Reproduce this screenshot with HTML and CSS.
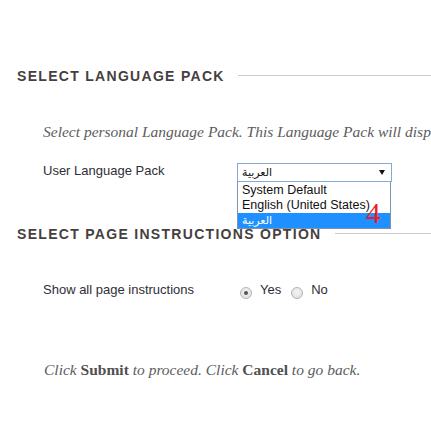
FILE: index.html
```html
<!DOCTYPE html>
<html lang="en">
<head>
<meta charset="utf-8">
<title>Personal Settings</title>
<link rel="stylesheet" href="styles.css">
</head>
<body>
<div class="page">
  <section class="step step-first">
    <div class="step-head">
      <h2 class="step-title">Select Language Pack</h2>
      <span class="step-rule"></span>
    </div>
    <p class="step-intro">Select personal Language Pack. This Language Pack will display in all areas of the system.</p>
    <div class="field-row field-lang">
      <label class="field-label">User Language Pack</label>
      <div class="select-wrap">
        <div class="select-box">
          <span class="select-value" dir="rtl">العربية</span>
          <span class="select-arrow"></span>
        </div>
        <ul class="select-list">
          <li class="opt">System Default</li>
          <li class="opt">English (United States)</li>
          <li class="opt opt-active"><span dir="rtl">العربية</span></li>
        </ul>
        <span class="marker">4</span>
      </div>
    </div>
  </section>

  <section class="step step-second">
    <div class="step-head">
      <h2 class="step-title">Select Page Instructions Option</h2>
      <span class="step-rule"></span>
    </div>
    <div class="field-row field-instr">
      <label class="field-label">Show all page instructions</label>
      <div class="radio-group">
        <span class="radio radio-on"></span><span class="radio-text">Yes</span>
        <span class="radio"></span><span class="radio-text">No</span>
      </div>
    </div>
  </section>

  <p class="submit-note">Click <strong>Submit</strong> to proceed. Click <strong>Cancel</strong> to go back.</p>
</div>
</body>
</html>
```

FILE: styles.css
```css
html, body {
  margin: 0;
  padding: 0;
  overflow: hidden;
  background: #ffffff;
}

.page {
  width: 431px;
  height: 448px;
  font-family: "Liberation Sans", Arial, sans-serif;
}

.step-head {
  display: flex;
  align-items: center;
  padding-left: 17px;
}

.step-first .step-head {
  padding-top: 68px;
}

.step-title {
  margin: 0;
  font-size: 14px;
  line-height: 16px;
  font-weight: bold;
  text-transform: uppercase;
  letter-spacing: 1.3px;
  color: #463f3f;
  white-space: nowrap;
}

.step-rule {
  flex: 1;
  margin-left: 13px;
  border-top: 1px solid #cccccc;
  margin-top: -1px;
}

.step-intro {
  margin: 39px 0 0 0;
  padding-left: 43px;
  font-family: "Liberation Serif", "Times New Roman", serif;
  font-style: italic;
  font-size: 15.5px;
  line-height: 18px;
  color: #5c5c5c;
  white-space: nowrap;
}

.field-row {
  display: flex;
  align-items: flex-start;
  padding-left: 43px;
}

.field-lang {
  margin-top: 22px;
  position: relative;
  z-index: 2;
}

.field-label {
  width: 194px;
  flex: none;
  font-size: 13px;
  line-height: 15px;
  color: #2e2e38;
}

.select-wrap {
  position: relative;
  width: 155px;
}

.select-box {
  box-sizing: border-box;
  height: 19px;
  border: 1px solid #86a9d6;
  background: #ffffff;
  display: flex;
  align-items: center;
  padding-left: 4px;
}

.select-value {
  flex: 1;
  text-align: left;
  font-family: "DejaVu Sans", sans-serif;
  font-size: 11px;
  line-height: 13px;
  color: #111111;
}

.select-arrow {
  width: 0;
  height: 0;
  border-left: 3.5px solid transparent;
  border-right: 3.5px solid transparent;
  border-top: 5px solid #111111;
  margin-right: 6px;
}

.select-list {
  position: absolute;
  top: 19px;
  left: 0;
  width: 154px;
  box-sizing: border-box;
  margin: 0;
  padding: 1px 0 0 0;
  list-style: none;
  background: #ffffff;
  border: 1px solid #7f93b0;
  border-top: 0;
}

.opt {
  height: 15px;
  line-height: 15px;
  padding-left: 4px;
  font-size: 12.5px;
  color: #111111;
  white-space: nowrap;
}

.opt-active {
  background: #1e90ff;
  color: #ffffff;
  font-family: "DejaVu Sans", sans-serif;
  font-size: 11px;
}

.marker {
  position: absolute;
  left: 129px;
  top: 36px;
  font-family: "Liberation Serif", "Times New Roman", serif;
  font-size: 29px;
  line-height: 29px;
  color: #ee1c25;
}

.step-second .step-head {
  padding-top: 44px;
}

.field-instr {
  margin-top: 40px;
}

.radio-group {
  display: flex;
  align-items: flex-start;
  padding-left: 3px;
  font-size: 13px;
  line-height: 15px;
  color: #2e2e38;
}

.radio {
  box-sizing: border-box;
  width: 12px;
  height: 12px;
  border-radius: 50%;
  border: 1px solid #b4b4b4;
  background: radial-gradient(circle at 50% 40%, #f4f4f4 0%, #dcdcdc 100%);
  margin-top: 5px;
  margin-right: 8px;
  position: relative;
  flex: none;
}

.radio-on::after {
  content: "";
  position: absolute;
  left: 3px;
  top: 3px;
  width: 4px;
  height: 4px;
  border-radius: 50%;
  background: #555555;
}

.radio-text {
  margin-right: 10px;
}

.submit-note {
  margin: 62px 0 0 0;
  padding-left: 44px;
  font-family: "Liberation Serif", "Times New Roman", serif;
  font-style: italic;
  font-size: 15.5px;
  line-height: 18px;
  color: #5c5c5c;
}

.submit-note strong {
  font-style: normal;
  font-weight: bold;
  color: #505050;
}
```
